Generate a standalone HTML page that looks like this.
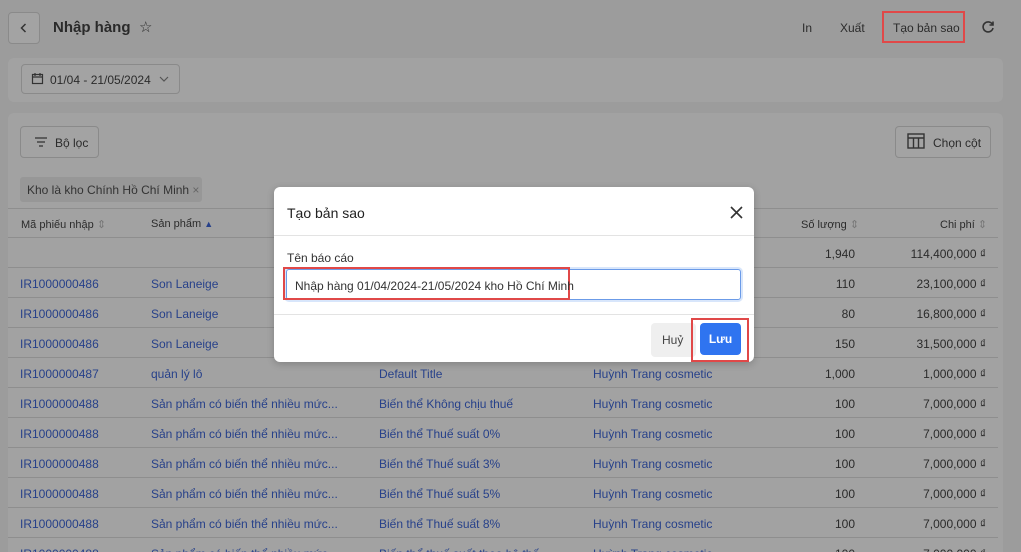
<!DOCTYPE html><html><head><meta charset="utf-8"><style>
*{box-sizing:border-box;margin:0;padding:0}
html{width:1021px;height:552px;overflow:hidden}
body{width:1021px;height:552px;overflow:hidden;background:#9c9c9c;font-family:"Liberation Sans",sans-serif;font-size:12px;color:#2b2b2b;position:relative}
.a{position:absolute}
.btn{position:absolute;border:1px solid #8a8a8a;border-radius:4px;background:#a3a3a3}
.card{position:absolute;background:#a2a2a2;border-radius:6px}
.row{position:absolute;left:8px;width:990px;height:30px;border-bottom:1px solid #8e8e8e}
.row>span{position:absolute;top:9px;white-space:nowrap}
.l{color:#27418a}
</style></head><body>
<div class="btn" style="left:8px;top:12px;width:32px;height:32px"></div>
<svg class="a" style="left:18px;top:22px" width="12" height="12"><path d="M7.5 2 L3.5 6 L7.5 10" fill="none" stroke="#333" stroke-width="1.5"/></svg>
<div class="a" style="left:53px;top:19px;font-size:15px;font-weight:bold;color:#2a2a2a">Nhập hàng</div>
<div class="a" style="left:139px;top:18px;font-size:15px">☆</div>
<div class="a" style="left:802px;top:21px">In</div>
<div class="a" style="left:840px;top:21px">Xuất</div>
<div class="a" style="left:882px;top:11px;width:83px;height:32px;border:2px solid #e04848"></div>
<div class="a" style="left:893px;top:21px">Tạo bản sao</div>
<svg class="a" style="left:981px;top:20px" width="14" height="14"><path d="M11.5 4.5 A5 5 0 1 0 12 8" fill="none" stroke="#333" stroke-width="1.6"/><path d="M12 1.5 V5 H8.5" fill="none" stroke="#333" stroke-width="1.6"/></svg>
<div class="card" style="left:8px;top:58px;width:995px;height:44px"></div>
<div class="btn" style="left:21px;top:64px;width:159px;height:30px"></div>
<svg class="a" style="left:31px;top:72px" width="13" height="13"><rect x="1.5" y="2.5" width="10" height="9" fill="none" stroke="#333" stroke-width="1.2"/><path d="M1.5 5h10M4 1v3M9 1v3" stroke="#333" stroke-width="1.2"/></svg>
<div class="a" style="left:50px;top:73px">01/04 - 21/05/2024</div>
<svg class="a" style="left:159px;top:75px" width="10" height="8"><path d="M1 2l4 4 4-4" fill="none" stroke="#555" stroke-width="1.2"/></svg>
<div class="card" style="left:8px;top:113px;width:995px;height:450px"></div>
<div class="btn" style="left:20px;top:126px;width:79px;height:32px"></div>
<svg class="a" style="left:34px;top:136px" width="14" height="12"><path d="M1 2h12M3 6h8M5 10h4" stroke="#333" stroke-width="1.3"/></svg>
<div class="a" style="left:55px;top:136px">Bộ lọc</div>
<div class="btn" style="left:895px;top:126px;width:96px;height:32px"></div>
<svg class="a" style="left:907px;top:133px" width="18" height="16"><rect x="1" y="1" width="16" height="14" fill="none" stroke="#333" stroke-width="1.4"/><path d="M1 5h16M6.5 5v10M11.5 5v10" stroke="#333" stroke-width="1.4"/></svg>
<div class="a" style="left:933px;top:136px">Chọn cột</div>
<div class="a" style="left:20px;top:177px;width:182px;height:25px;background:#979797;border-radius:3px"></div>
<div class="a" style="left:27px;top:183px;color:#333">Kho là kho Chính Hồ Chí Minh <span style="color:#666">×</span></div>
<div class="row" style="top:208px;border-top:1px solid #8e8e8e;font-size:11px"><span style="left:13px">Mã phiếu nhập <span style="color:#777">⇕</span></span><span style="left:143px">Sản phẩm <span style="color:#27418a;font-size:9px">▲</span></span><span style="left:793px">Số lượng <span style="color:#777">⇕</span></span><span style="left:932px">Chi phí <span style="color:#777">⇕</span></span></div>
<div class="row" style="top:238px"><span style="right:143px">1,940</span><span style="right:12px">114,400,000 ₫</span></div>
<div class="row" style="top:268px"><span class="l" style="left:12px">IR1000000486</span><span class="l" style="left:143px">Son Laneige</span><span style="right:143px">110</span><span style="right:12px">23,100,000 ₫</span></div>
<div class="row" style="top:298px"><span class="l" style="left:12px">IR1000000486</span><span class="l" style="left:143px">Son Laneige</span><span style="right:143px">80</span><span style="right:12px">16,800,000 ₫</span></div>
<div class="row" style="top:328px"><span class="l" style="left:12px">IR1000000486</span><span class="l" style="left:143px">Son Laneige</span><span style="right:143px">150</span><span style="right:12px">31,500,000 ₫</span></div>
<div class="row" style="top:358px"><span class="l" style="left:12px">IR1000000487</span><span class="l" style="left:143px">quản lý lô</span><span class="l" style="left:371px">Default Title</span><span class="l" style="left:585px">Huỳnh Trang cosmetic</span><span style="right:143px">1,000</span><span style="right:12px">1,000,000 ₫</span></div>
<div class="row" style="top:388px"><span class="l" style="left:12px">IR1000000488</span><span class="l" style="left:143px">Sản phẩm có biến thể nhiều mức...</span><span class="l" style="left:371px">Biến thể Không chịu thuế</span><span class="l" style="left:585px">Huỳnh Trang cosmetic</span><span style="right:143px">100</span><span style="right:12px">7,000,000 ₫</span></div>
<div class="row" style="top:418px"><span class="l" style="left:12px">IR1000000488</span><span class="l" style="left:143px">Sản phẩm có biến thể nhiều mức...</span><span class="l" style="left:371px">Biến thể Thuế suất 0%</span><span class="l" style="left:585px">Huỳnh Trang cosmetic</span><span style="right:143px">100</span><span style="right:12px">7,000,000 ₫</span></div>
<div class="row" style="top:448px"><span class="l" style="left:12px">IR1000000488</span><span class="l" style="left:143px">Sản phẩm có biến thể nhiều mức...</span><span class="l" style="left:371px">Biến thể Thuế suất 3%</span><span class="l" style="left:585px">Huỳnh Trang cosmetic</span><span style="right:143px">100</span><span style="right:12px">7,000,000 ₫</span></div>
<div class="row" style="top:478px"><span class="l" style="left:12px">IR1000000488</span><span class="l" style="left:143px">Sản phẩm có biến thể nhiều mức...</span><span class="l" style="left:371px">Biến thể Thuế suất 5%</span><span class="l" style="left:585px">Huỳnh Trang cosmetic</span><span style="right:143px">100</span><span style="right:12px">7,000,000 ₫</span></div>
<div class="row" style="top:508px"><span class="l" style="left:12px">IR1000000488</span><span class="l" style="left:143px">Sản phẩm có biến thể nhiều mức...</span><span class="l" style="left:371px">Biến thể Thuế suất 8%</span><span class="l" style="left:585px">Huỳnh Trang cosmetic</span><span style="right:143px">100</span><span style="right:12px">7,000,000 ₫</span></div>
<div class="row" style="top:538px"><span class="l" style="left:12px">IR1000000488</span><span class="l" style="left:143px">Sản phẩm có biến thể nhiều mức...</span><span class="l" style="left:371px">Biến thể thuế suất theo hệ thố</span><span class="l" style="left:585px">Huỳnh Trang cosmetic</span><span style="right:143px">100</span><span style="right:12px">7,000,000 ₫</span></div>

<div class="a" style="left:274px;top:187px;width:480px;height:175px;background:#fff;border-radius:6px;box-shadow:0 2px 8px rgba(0,0,0,.2)">
<div class="a" style="left:13px;top:18px;font-size:14px;color:#222">Tạo bản sao</div>
<svg class="a" style="left:456px;top:19px" width="13" height="13"><path d="M1 1L12 12M12 1L1 12" stroke="#333" stroke-width="1.6"/></svg>
<div class="a" style="left:0;top:48px;width:480px;border-top:1px solid #e3e3e3"></div>
<div class="a" style="left:13px;top:64px;color:#333">Tên báo cáo</div>
<div class="a" style="left:12px;top:82px;width:455px;height:31px;border:1px solid #6b9be8;border-radius:3px;box-shadow:0 0 0 2px #d8e6fb"></div>
<div class="a" style="left:9px;top:80px;width:287px;height:33px;border:2px solid #e04848"></div>
<div class="a" style="left:21px;top:92px;color:#333">Nhập hàng 01/04/2024-21/05/2024 kho Hồ Chí Minh</div>
<div class="a" style="left:0;top:127px;width:480px;border-top:1px solid #e3e3e3"></div>
<div class="a" style="left:377px;top:136px;width:45px;height:34px;background:#efefef;border-radius:4px"></div>
<div class="a" style="left:388px;top:146px;color:#444">Huỷ</div>
<div class="a" style="left:417px;top:131px;width:58px;height:44px;border:2px solid #e04848"></div>
<div class="a" style="left:426px;top:136px;width:41px;height:32px;background:#2f74f0;border-radius:4px;color:#fff;font-weight:bold;text-align:center;line-height:32px;font-size:12px">Lưu</div>
</div>
</body></html>
